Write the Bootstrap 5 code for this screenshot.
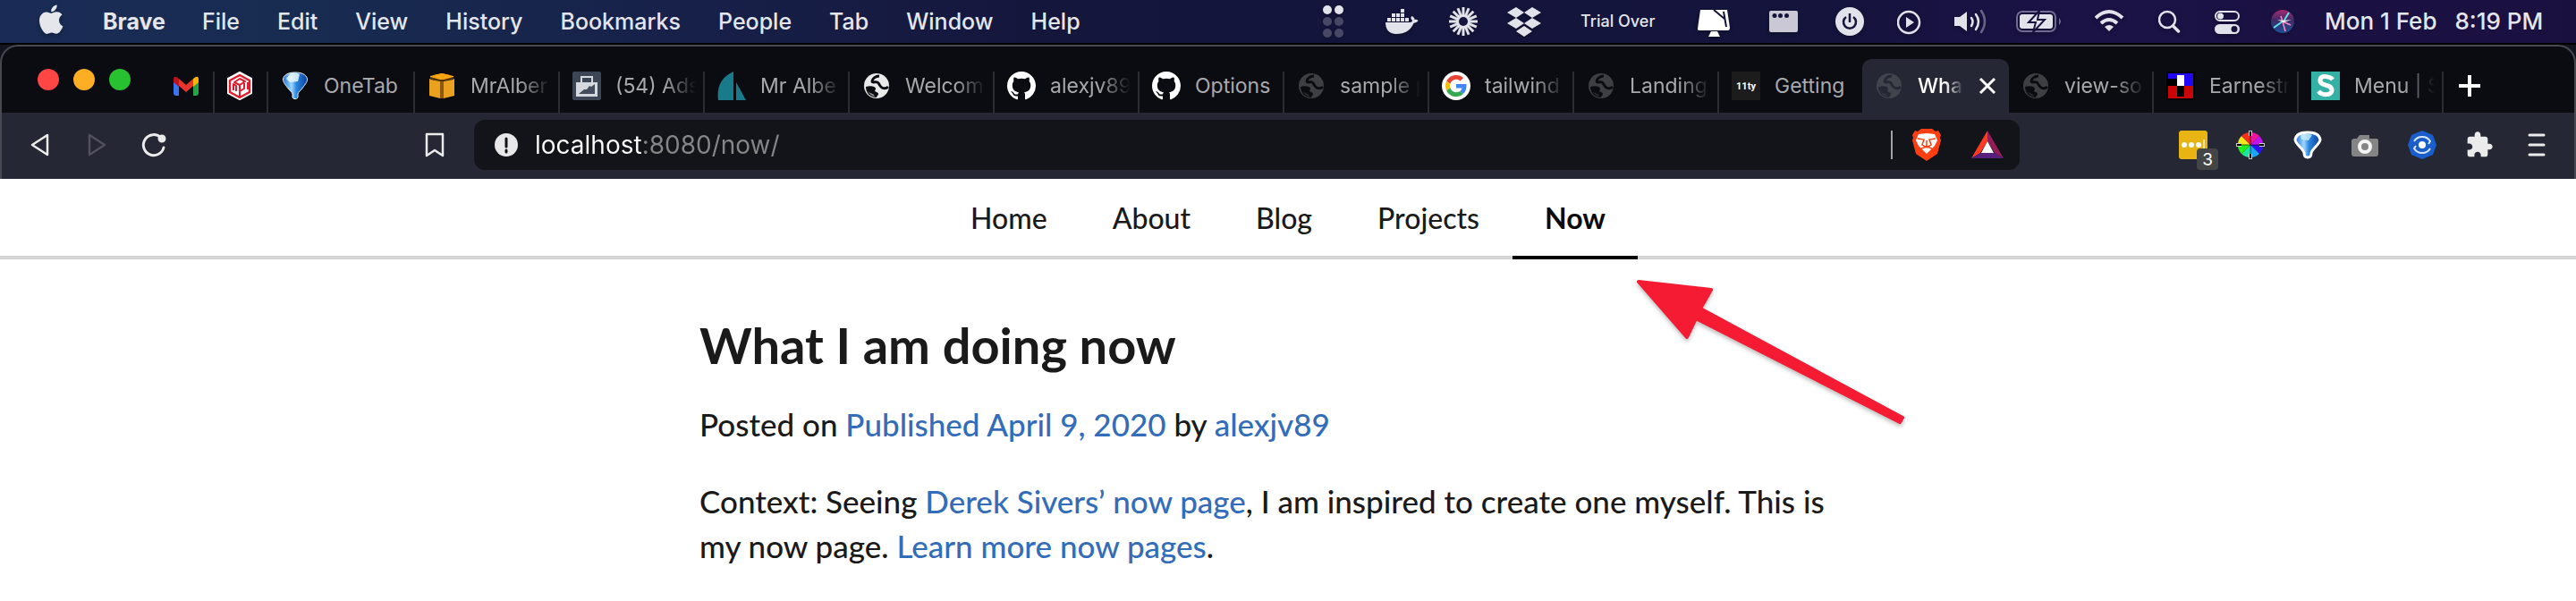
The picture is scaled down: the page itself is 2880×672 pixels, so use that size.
<!DOCTYPE html>
<html lang="en">
<head>
<meta charset="utf-8">
<meta name="viewport" content="width=device-width, initial-scale=1">
<title>What I am doing now</title>
<link href="https://cdn.jsdelivr.net/npm/bootstrap@5.3.0/dist/css/bootstrap.min.css" rel="stylesheet">
<style>
  body { font-family: Lato, "Liberation Sans", sans-serif; color: #1a1a1a; background: #fff; overflow-x: hidden; }
  svg { display: block; flex: none; }
  button { background: none; border: 0; padding: 0; color: inherit; font: inherit; }

  /* system menu bar */
  .sysbar { height: 48px; padding: 0 38px 0 44px; font: 500 25px/48px Inter, sans-serif; color: #e4e6ec; white-space: nowrap;
    background: linear-gradient(90deg, #1a2c56 0%, #182b50 12%, #17214a 26%, #15163c 40%, #14143c 70%, #1b1246 80%, #1a1040 100%); }
  .sysbar .menus { gap: 42px; }
  .sysbar .menus .fw-bold { margin-right: -1px; }
  .sysbar .status { gap: 32px; }
  .sysbar svg { filter: drop-shadow(0 2px 2px rgba(0,0,0,.3)); }
  .trial { width: 99px; font-size: 18px; }
  .clock { width: 243px; gap: 20px; font-size: 26px; }

  /* browser window */
  .browser { background: #11131f; border-top: 2px solid #000; font-family: Inter, sans-serif; }
  .frame { border: 2px solid #484950; border-bottom: 0; border-radius: 20px 20px 0 0; background: #0b0c11; overflow: hidden; }
  .strip { height: 74px; padding: 14px 0 0 40px; }
  .lights { gap: 16px; padding-top: 11px; width: 138px; height: 60px; }
  .lights button { width: 24px; height: 24px; border-radius: 50%; }
  .tab-item { flex: 0 1 162px; min-width: 0; height: 60px; padding-left: 14px; position: relative; font-size: 23px; line-height: 32px; color: #a9a9ac; }
  .tab-item.pinned { flex-basis: 60px; padding-left: 12px; }
  .tab-item.roomy { flex-basis: 164px; }
  .tab-item.ends { flex-basis: 160px; }
  .tab-item:not(.ends):not(.current) { background: linear-gradient(#2c2c30, #2c2c30) right bottom / 2px 46px no-repeat; }
  .tab-item button { gap: 16px; min-width: 0; }
  .tab-item .caption { width: 92px; overflow: hidden; white-space: nowrap; text-align: left;
    -webkit-mask-image: linear-gradient(90deg, #000 60%, transparent 98%); mask-image: linear-gradient(90deg, #000 60%, transparent 98%); }
  .tab-item .caption.whole { -webkit-mask-image: none; mask-image: none; }
  .tab-item.current { flex-basis: 164px; background: #252734; color: #fff; border-radius: 10px 10px 0 0; font-weight: 500; }
  .tab-item.current .caption { width: 52px; }
  .tools { background: #252734; height: 74px; padding: 8px 26px 10px; color: #ebebeb; }
  .tools .gap-tools { gap: 32px; }
  .bookmark { margin-left: 282px; }
  .omnibox { margin-left: 28px; margin-right: 178px; height: 56px; border-radius: 12px; background: #131419; padding: 0 18px 0 22px; }
  .omnibox input { border: 0; outline: 0; padding: 0; margin-left: 16px; min-width: 0; height: 56px; font: 400 28px/56px Inter, sans-serif;
    color: transparent; -webkit-background-clip: text; background-clip: text; background-color: transparent;
    background-image: linear-gradient(90deg, #fff 122px, #858688 122px); }
  .sepline { width: 2px; height: 32px; background: #a2a2a5; margin-right: 22px; }
  .shield { margin-right: 34px; }
  .counter { position: absolute; left: 20px; top: 20px; width: 24px; height: 24px; border-radius: 4px; background: #444547; color: #fff; font-size: 19px; line-height: 25px; text-align: center; }

  /* site */
  .sitenav { border-bottom: 4px solid #d5d5d5; gap: 1px; }
  .sitenav .nav-link { padding: 20px 36px 18px; margin-bottom: -4px; border-bottom: 4px solid transparent; font-size: 32px; line-height: 48px; color: #1a1a1a; font-weight: 500; }
  .sitenav .nav-link.active { font-weight: 700; color: #0b0b0b; border-bottom-color: #000; }
  .post { max-width: 1316px; margin: 0 auto; padding-top: 62px; position: relative; font-size: 35px; line-height: 50px; font-weight: 500; }
  .post h1 { font-size: 56px; line-height: 68px; font-weight: 700; margin: 0 0 29px; }
  .post p { margin: 0 0 36px; }
  .post a { color: #336dba; text-decoration: none; }
  .pointer { position: absolute; left: 1044px; top: 18px; filter: drop-shadow(0 3px 2px rgba(0,0,0,.25)); }
</style>
</head>
<body>

<svg width="0" height="0" class="position-absolute" aria-hidden="true">
  <defs>
    <symbol id="globe" viewBox="0 0 32 32"><mask id="gm"><circle cx="16" cy="16" r="14" fill="#fff"/><path d="M4 17c3-1 7-1 9 0 3 1 2 3 1 5 1 1 4 1 4 3s-2 2-2 4C9 29 4 24 4 17z" fill="#000"/><path d="M6 22c3 4 5 5 8 6-1-3-2-3-5-4z" fill="#fff" opacity=".6"/><path d="M19 5c-4 0-8 3-8 6 0 2 4 0 6 1s2 4 5 6c2 1 5 1 7-1" fill="none" stroke="#000" stroke-width="3"/></mask><rect width="32" height="32" fill="currentColor" mask="url(#gm)"/></symbol>
    <symbol id="octo" viewBox="0 0 16 16"><path fill="#fff" d="M8 0C3.58 0 0 3.58 0 8c0 3.54 2.29 6.53 5.47 7.59.4.07.55-.17.55-.38 0-.19-.01-.82-.01-1.49-2.01.37-2.53-.49-2.69-.94-.09-.23-.48-.94-.82-1.13-.28-.15-.68-.52-.01-.53.63-.01 1.08.58 1.23.82.72 1.21 1.87.87 2.33.66.07-.52.28-.87.51-1.07-1.78-.2-3.64-.89-3.64-3.95 0-.87.31-1.59.82-2.15-.08-.2-.36-1.02.08-2.12 0 0 .67-.21 2.2.82.64-.18 1.32-.27 2-.27s1.36.09 2 .27c1.53-1.04 2.2-.82 2.2-.82.44 1.1.16 1.92.08 2.12.51.56.82 1.27.82 2.15 0 3.07-1.87 3.75-3.65 3.95.29.25.54.73.54 1.48 0 1.07-.01 1.93-.01 2.2 0 .21.15.46.55.38A8.01 8.01 0 0 0 16 8c0-4.42-3.58-8-8-8z"/></symbol>
    <linearGradient id="blue"><stop offset="0" stop-color="#1d6fd0"/><stop offset=".35" stop-color="#9fd8ff"/><stop offset=".55" stop-color="#2a86e0"/><stop offset="1" stop-color="#0a3f9c"/></linearGradient>
    <symbol id="funnel" viewBox="0 0 32 32"><path d="M2.500 8C4 3 9 1 16 1s12 2 13.500 7c.5 3-2 6-5 10-2 3-5 5-5.500 7v4l-1.500 1.500h-3L13 29v-4c-.5-2-3.500-4-5.500-7-3-4-5.500-7-5-10z" fill="url(#blue)" stroke="#e8f2fa"/><path d="M10 3c4-2 9-1 11 0l-2 8-9 1-4-4z" fill="#eaf7ff" opacity=".85"/></symbol>
  </defs>
</svg>

<header class="sysbar d-flex justify-content-between">
  <nav class="menus d-flex align-items-center" aria-label="Menu bar">
    <svg width="29" height="48" viewBox="0 0 29 48" fill="#e4e6ec"><path transform="translate(-3 5.500) scale(1.350)" d="M12.152 6.896c-.948 0-2.415-1.078-3.960-1.040-2.040.027-3.910 1.183-4.961 3.014-2.117 3.675-.546 9.103 1.519 12.090 1.013 1.454 2.208 3.090 3.792 3.039 1.520-.065 2.090-.987 3.935-.987 1.831 0 2.350.987 3.960.948 1.637-.026 2.676-1.480 3.676-2.948 1.156-1.688 1.636-3.325 1.662-3.415-.039-.013-3.182-1.221-3.220-4.857-.026-3.040 2.480-4.494 2.597-4.559-1.429-2.090-3.623-2.324-4.390-2.376-2-.156-3.675 1.090-4.610 1.090zM15.530 3.830c.843-1.012 1.400-2.427 1.245-3.830-1.207.052-2.662.805-3.532 1.818-.780.896-1.454 2.338-1.273 3.714 1.338.104 2.715-.688 3.559-1.701"/></svg>
    <button class="fw-bold">Brave</button><button>File</button><button>Edit</button><button>View</button><button>History</button><button>Bookmarks</button><button>People</button><button>Tab</button><button>Window</button><button>Help</button>
  </nav>
  <div class="status d-flex align-items-center">
    <svg width="38" height="48" fill="#e2e2ea"><g><circle cx="5" cy="11" r="5"/><circle cx="18" cy="11" r="5"/></g><g opacity=".25"><circle cx="5" cy="24" r="5"/><circle cx="18" cy="24" r="5"/><circle cx="5" cy="37" r="5"/><circle cx="18" cy="37" r="5"/></g></svg>
    <svg width="39" height="48" fill="#e2e2ea"><path d="M0 25h27c2 0 3-1 3-2-2-2-2-4-.500-5 2 1 3 2 3 4 1.500-.5 3 0 4 1-1 2-3 2.500-5 3C28 34 22 38 12 38 4 38 0 33 0 25z"/><path d="M2 20h4v4H2zM7 20h4v4H7zM12 20h4v4h-4zM17 20h4v4h-4zM22 20h4v4h-4zM7 15h4v4H7zM12 15h4v4h-4zM17 15h4v4h-4zM17 10h4v4h-4z"/></svg>
    <svg width="33" height="48" viewBox="0 0 33 48"><path d="M16 8v32M0 24h32M4.700 12.700l22.600 22.600M4.700 35.300l22.600-22.600M1.200 17.900l29.600 12.200M1.200 30.100l29.600-12.200M9.900 9.200l12.200 29.600M22.100 9.200L9.900 38.800" stroke="#e2e2ea" stroke-width="3"/><circle cx="16" cy="24" r="5" fill="#15143d"/></svg>
    <svg width="50" height="48" fill="#e2e2ea"><path d="M10 8l9 6-9 6-10-6zM28 8l10 6-10 6-9-6zM10 20l9 6-9 6-10-6zM28 20l10 6-10 6-9-6zM19 29l9 6-9 6-9-6z"/></svg>
    <span class="trial">Trial Over</span>
    <svg width="48" height="48" fill="#fff"><path d="M3 11h30l3 20c0 2-1 3-2 3H2c-2 0-2-1-2-2zM15 35h7l3 6H12z"/><path d="M18 11l12 10M29 13l3 17" stroke="#15143d" stroke-width="2" fill="none"/></svg>
    <svg width="42" height="48"><rect y="12" width="32" height="24" rx="2" fill="#c9c8d4"/><g fill="#15143d"><circle cx="6" cy="17.500" r="2.500"/><circle cx="12.500" cy="17.500" r="2.500"/><circle cx="19.500" cy="17.500" r="2.500"/></g></svg>
    <svg width="37" height="48"><circle cx="16" cy="24" r="16" fill="#e2e2ea"/><path d="M12 19a7 7 0 1 0 8 0M16 15v10" fill="none" stroke="#15143d" stroke-width="2.500"/></svg>
    <svg width="31" height="48"><circle cx="13" cy="25" r="12" fill="none" stroke="#e2e2ea" stroke-width="2.500"/><path d="M10 19v12l9-6z" fill="#e2e2ea"/></svg>
    <svg width="38" height="48" fill="none" stroke="#e2e2ea" stroke-width="2.500" stroke-linecap="round"><path d="M1 19h6l8-6v22l-8-6H1z" fill="#e2e2ea" stroke="none"/><path d="M20 20q3 4 0 9M25 16q6 8 0 17"/><path d="M31 12q8 12 0 24" opacity=".4"/></svg>
    <svg width="56" height="48" fill="none"><rect x="1" y="13" width="43" height="22" rx="6" stroke="#6f6b93" stroke-width="2"/><path d="M48 20q4 4 0 8z" fill="#6f6b93"/><rect x="4" y="16" width="37" height="16" rx="3" fill="#e2e2ea"/><path d="M26 12L14 25h8l-3 11 13-14h-8z" fill="#e2e2ea" stroke="#19123f" stroke-width="2"/></svg>
    <svg width="39" height="48" fill="none" stroke="#e2e2ea" stroke-width="4"><path d="M1 20q15-14 30 0M7 26q9-8 18 0"/><path d="M16 35l-5-5q5-4 10 0z" fill="#e2e2ea" stroke="none"/></svg>
    <svg width="31" height="48" fill="none" stroke="#e2e2ea" stroke-width="2.500"><circle cx="10" cy="22" r="9"/><path d="M16.500 29l6 6" stroke-width="3.500" stroke-linecap="round"/></svg>
    <svg width="31" height="48" fill="none"><rect x="1" y="13" width="26" height="10" rx="5" stroke="#e2e2ea" stroke-width="2"/><circle cx="6.500" cy="18" r="3.500" fill="#e2e2ea"/><rect y="27" width="28" height="11" rx="5.500" fill="#e2e2ea"/><circle cx="22" cy="32.500" r="3.500" fill="#19123f"/></svg>
    <svg width="28" height="48"><defs><linearGradient id="siri" x1="0" y1="0" x2="0" y2="1"><stop offset="0" stop-color="#a8286f"/><stop offset=".45" stop-color="#3c2c68"/><stop offset="1" stop-color="#1d4f96"/></linearGradient></defs><circle cx="13" cy="24" r="13" fill="url(#siri)"/><path d="M3 31l10-7M20 14l-6 10" stroke="#5fe0e8" stroke-width="2"/><path d="M11 18l2 6 3 11M13 24l9 4" stroke="#ff8dcb" stroke-width="1.500" fill="none"/><path d="M7 22l7 1 9-1-9 3z" fill="#fff"/></svg>
    <time class="clock d-flex"><span>Mon 1 Feb</span><span>8:19 PM</span></time>
  </div>
</header>

<section class="browser">
  <div class="frame">
    <div class="strip d-flex">
      <div class="lights d-flex"><button style="background:#fe4644" aria-label="Close window"></button><button style="background:#fdae24" aria-label="Minimise"></button><button style="background:#28c131" aria-label="Zoom"></button></div>
      <div class="tab-item pinned d-flex align-items-center"><button aria-label="Gmail"><svg width="32" height="32"><path d="M2 10v14q0 3 3 3h3V13z" fill="#3b72ee"/><path d="M24 13v14h3q3 0 3-3V10z" fill="#2ba24a"/><path d="M8 8l8 7 8-7v8l-8 7-8-7z" fill="#e6342e"/><path d="M2 9q0-6 6-1v9l-6-5z" fill="#b81420"/><path d="M30 9q0-6-6-1v9l6-5z" fill="#fbb40e"/></svg></button></div>
      <div class="tab-item pinned d-flex align-items-center"><button aria-label="Box"><svg width="32" height="32" fill="none" stroke-linejoin="round"><path d="M16 1l13 7v16l-13 7-13-7V8z" fill="#fff" stroke="#fff" stroke-width="2"/><path d="M16 4l11 6v13l-11 6-11-6V10z" stroke="#e01d2c" stroke-width="2.500"/><path d="M10 12l6-4 6 3-6 4zM16 15v13M9 21v-7l3 2v6M21 13v6l-5 3M25 12v8" stroke="#e01d2c" stroke-width="2"/></svg></button></div>
      <div class="tab-item roomy d-flex align-items-center"><button class="d-flex"><svg width="32" height="32"><use href="#funnel"/></svg><span class="caption whole">OneTab</span></button></div>
      <div class="tab-item d-flex align-items-center"><button class="d-flex"><svg width="32" height="32"><path d="M2 8l14 3 14-3v19l-12 3h-4L2 27z" fill="#eaa11f"/><path d="M14 11h4v19h-4z" fill="#8a5a10"/><path d="M3 5l13-3 13 3v2l-13 4L3 7z" fill="#ffa512"/><path d="M3 6l11 3h4l11-3v3l-11 2h-4L3 9z" fill="#4d340c"/><path d="M7 4l9-2 9 2-9 4z" fill="#ffa512"/></svg><span class="caption">MrAlber</span></button></div>
      <div class="tab-item d-flex align-items-center"><button class="d-flex"><svg width="32" height="32"><rect width="32" height="32" rx="2" fill="#3c4655"/><path d="M4 12h24v16H4z" fill="#d5d9df"/><path d="M10 12V6h12v6" fill="none" stroke="#d5d9df" stroke-width="2"/><path d="M7 25l6-5h3l3-4 2 1 4-3v11z" fill="#434d5c"/></svg><span class="caption">(54) Ads</span></button></div>
      <div class="tab-item d-flex align-items-center"><button class="d-flex"><svg width="32" height="32" fill="#187a8a"><path d="M18 0v32H1C-1 18 4 6 18 0zM21 12l11 20H21z"/></svg><span class="caption">Mr Albe</span></button></div>
      <div class="tab-item d-flex align-items-center"><button class="d-flex"><svg width="32" height="32" color="#e9e9e9"><use href="#globe"/></svg><span class="caption">Welcom</span></button></div>
      <div class="tab-item d-flex align-items-center"><button class="d-flex"><svg width="32" height="32"><use href="#octo"/></svg><span class="caption">alexjv89</span></button></div>
      <div class="tab-item d-flex align-items-center"><button class="d-flex"><svg width="32" height="32"><use href="#octo"/></svg><span class="caption whole">Options</span></button></div>
      <div class="tab-item d-flex align-items-center"><button class="d-flex"><svg width="32" height="32" color="#3e3f43"><use href="#globe"/></svg><span class="caption">sample p</span></button></div>
      <div class="tab-item d-flex align-items-center"><button class="d-flex"><svg width="32" height="32" viewBox="-8 -8 64 64"><circle cx="24" cy="24" r="32" fill="#fff"/><path fill="#EA4335" d="M24 9.500c3.540 0 6.710 1.220 9.210 3.600l6.850-6.850C35.900 2.380 30.470 0 24 0 14.620 0 6.510 5.380 2.560 13.220l7.980 6.190C12.430 13.720 17.740 9.500 24 9.500z"/><path fill="#4285F4" d="M46.980 24.550c0-1.570-.150-3.090-.380-4.550H24v9.020h12.940c-.580 2.960-2.260 5.480-4.780 7.180l7.730 6c4.510-4.180 7.090-10.360 7.090-17.650z"/><path fill="#FBBC05" d="M10.530 28.590c-.480-1.450-.760-2.990-.760-4.590s.270-3.140.760-4.590l-7.980-6.190C.920 16.460 0 20.120 0 24c0 3.880.920 7.540 2.560 10.780z"/><path fill="#34A853" d="M24 48c6.480 0 11.930-2.130 15.890-5.810l-7.730-6c-2.150 1.450-4.920 2.300-8.160 2.300-6.260 0-11.570-4.220-13.470-9.910l-7.980 6.190C6.510 42.620 14.620 48 24 48z"/></svg><span class="caption">tailwind</span></button></div>
      <div class="tab-item d-flex align-items-center"><button class="d-flex"><svg width="32" height="32" color="#3e3f43"><use href="#globe"/></svg><span class="caption">Landing</span></button></div>
      <div class="tab-item ends d-flex align-items-center"><button class="d-flex"><svg width="32" height="32"><rect width="32" height="32" fill="#1c1c1c"/><text x="16" y="20" text-anchor="middle" font-family="Roboto" font-weight="700" font-size="11" fill="#fff">11ty</text></svg><span class="caption whole">Getting</span></button></div>
      <div class="tab-item current d-flex align-items-center"><button class="d-flex"><svg width="32" height="32" color="#42444d"><use href="#globe"/></svg><span class="caption">Wha</span></button><button class="ms-3" aria-label="Close tab"><svg width="20" height="20"><path d="M2 2l16 16M18 2L2 18" stroke="#fff" stroke-width="3"/></svg></button></div>
      <div class="tab-item d-flex align-items-center"><button class="d-flex"><svg width="32" height="32" color="#3e3f43"><use href="#globe"/></svg><span class="caption">view-so</span></button></div>
      <div class="tab-item d-flex align-items-center"><button class="d-flex"><svg width="32" height="32"><path d="M0 0h32v32H0z" fill="#000"/><path d="M2 2h10v6H2zM12 2h18v14H20V4h-8z" fill="#2207f5"/><path d="M12 4h8v12h-8z" fill="#fff"/><path d="M2 16h10v14H2zM20 16h10v14H20zM12 28h8v2h-8z" fill="#c90508"/></svg><span class="caption">Earnestr</span></button></div>
      <div class="tab-item d-flex align-items-center"><button class="d-flex"><svg width="32" height="32"><rect width="32" height="32" fill="#33b1a5"/><path d="M24 9c-3-4-13-5-14 0-1 8 13 4 13 12 0 6-11 6-15 1" fill="none" stroke="#fff" stroke-width="5"/></svg><span class="caption">Menu | S</span></button></div>
      <button class="ms-3" aria-label="New tab"><svg width="26" height="26"><path d="M13 1v24M1 13h24" stroke="#fff" stroke-width="4"/></svg></button>
    </div>

    <div class="tools d-flex align-items-center">
      <div class="d-flex gap-tools">
        <button aria-label="Back"><svg width="32" height="32" fill="none" stroke="#ebebeb" stroke-width="2.500" stroke-linejoin="round"><path d="M25 5v22L8 16z"/></svg></button>
        <button aria-label="Forward"><svg width="32" height="32" fill="none" stroke="#50515d" stroke-width="2.500" stroke-linejoin="round"><path d="M8 5v22l17-11z"/></svg></button>
        <button aria-label="Reload"><svg width="32" height="32" fill="none" stroke="#ebebeb" stroke-width="3" stroke-linecap="round"><path d="M24 8A11.500 11.500 0 1 0 27 19"/><circle cx="25" cy="9" r="3" fill="#ebebeb"/></svg></button>
      </div>
      <button class="bookmark" aria-label="Bookmark"><svg width="32" height="32" fill="none" stroke="#ebebeb" stroke-width="2.500" stroke-linejoin="round"><path d="M7 4h18v24l-9-6-9 6z"/></svg></button>
      <div class="omnibox d-flex align-items-center flex-grow-1">
        <svg width="30" height="32"><circle cx="14" cy="16" r="13" fill="#e8e8e8"/><path d="M14 9v9M14 22v2" stroke="#131419" stroke-width="3" stroke-linecap="round"/></svg>
        <input class="flex-grow-1" type="text" value="localhost:8080/now/" aria-label="Address">
        <span class="sepline"></span>
        <svg width="32" height="36" class="shield"><path d="M10 0h12l4 3 3-1 3 5-1 3 1 3-4 15-12 8-12-8L0 13l1-3-1-3 3-5 3 1z" fill="#fb3f12"/><path d="M7 6l9-1 9 1 3 7-3 6-3 3-6 6-6-6-3-3-3-6z" fill="#fff"/><path d="M6 11l7 1-2 6 5 3 5-3-2-6 7-1M16 13v7M10 22l6-2 6 2" fill="none" stroke="#fb3f12" stroke-width="1.500"/></svg>
        <svg width="36" height="32"><path d="M18 0L0 31l10-6 8-13z" fill="#ff3a23"/><path d="M18 0l18 31-10-6-8-13z" fill="#931e57"/><path d="M0 31h36l-10-6H10z" fill="#57207f"/><path d="M18 12l7 13H11z" fill="#fff"/></svg>
      </div>
      <div class="d-flex gap-tools">
        <button class="position-relative" aria-label="Notes extension"><svg width="32" height="32"><rect width="32" height="32" rx="3" fill="#e8b414"/><g fill="#fff"><circle cx="6" cy="16" r="3"/><circle cx="14" cy="16" r="3"/><circle cx="22" cy="16" r="3"/><path d="M27 10h2v12h-2z" opacity=".6"/></g></svg><span class="counter">3</span></button>
        <button aria-label="Colour picker"><svg width="32" height="32"><path d="M16 16V2a14 14 0 0 1 10 4z" fill="#f0149c"/><path d="M16 16L26 6a14 14 0 0 1 4 10z" fill="#c015f0"/><path d="M16 16h14a14 14 0 0 1-4 10z" fill="#2a12f2"/><path d="M16 16l10 10a14 14 0 0 1-10 4z" fill="#1aa5f4"/><path d="M16 16v14a14 14 0 0 1-10-4z" fill="#1ce69a"/><path d="M16 16L6 26a14 14 0 0 1-4-10z" fill="#25f01c"/><path d="M16 16H2A14 14 0 0 1 6 6z" fill="#f0e81a"/><path d="M16 16L6 6a14 14 0 0 1 10-4z" fill="#f5301a"/><path d="M16 0v6M16 26v6M0 16h6M26 16h6" stroke="#ccc" stroke-width="4"/><path d="M16 1v5M16 26v5M1 16h5M26 16h5" stroke="#000" stroke-width="2"/><path d="M16 6v20M6 16h20" stroke="#000" stroke-width="1" opacity=".6"/></svg></button>
        <button aria-label="OneTab"><svg width="32" height="32"><path d="M2 10C3 4 9 2 16 2s13 2 14 8c0 5-9 10-10 15 0 4-1 5-4 5s-4-1-4-5C11 20 2 15 2 10z" fill="url(#blue)" stroke="#fff" stroke-width="3"/><path d="M8 5q8-3 13 0l-4 6-8-1z" fill="#c8ecff" opacity=".8"/></svg></button>
        <button aria-label="Screenshot"><svg width="32" height="32"><path d="M10 5h11v4h8q2 0 2 2v15q0 3-3 3H4q-3 0-3-3V12q0-3 3-3h3z" fill="#858585"/><circle cx="16" cy="18" r="6" fill="#858585" stroke="#f4f4f4" stroke-width="4"/></svg></button>
        <button aria-label="Sync"><svg width="32" height="32"><path d="M16 0l12 5 4 11-4 11-12 5-12-5L0 16 4 5z" fill="#195ecb"/><circle cx="16" cy="16" r="4" fill="#fff"/><path d="M7 12q3-5 9-5 6 0 9 5l-2 3M25 20q-3 5-9 5-6 0-9-5l2-3" fill="none" stroke="#d8e7ff" stroke-width="2"/></svg></button>
        <button aria-label="Extensions"><svg width="32" height="32" viewBox="0 0 24 24" fill="#ebebeb"><path d="M20.500 11H19V7c0-1.100-.9-2-2-2h-4V3.500C13 2.120 11.880 1 10.500 1S8 2.120 8 3.500V5H4c-1.100 0-1.990.9-1.990 2v3.800H3.500c1.490 0 2.700 1.210 2.700 2.700s-1.210 2.700-2.700 2.700H2V20c0 1.100.9 2 2 2h3.800v-1.500c0-1.490 1.210-2.700 2.700-2.700 1.490 0 2.700 1.210 2.700 2.700V22H17c1.100 0 2-.9 2-2v-4h1.500c1.380 0 2.500-1.120 2.500-2.500S21.880 11 20.500 11z"/></svg></button>
        <button aria-label="Menu"><svg width="32" height="32"><path d="M8 5h16M8 16h16M8 27h16" stroke="#ebebeb" stroke-width="3" stroke-linecap="round"/></svg></button>
      </div>
    </div>
  </div>
</section>

<nav class="sitenav nav justify-content-center">
  <a class="nav-link" href="#home">Home</a>
  <a class="nav-link" href="#about">About</a>
  <a class="nav-link" href="#blog">Blog</a>
  <a class="nav-link" href="#projects">Projects</a>
  <a class="nav-link active" href="#now" aria-current="page">Now</a>
</nav>

<main class="post">
  <h1>What I am doing now</h1>
  <p>Posted on <a href="#date">Published April 9, 2020</a> by <a href="#author">alexjv89</a></p>
  <p>Context: Seeing <a href="#sivers">Derek Sivers’ now page</a>, I am inspired to create one myself. This is<br>my now page. <a href="#more">Learn more now pages</a>.</p>
  <svg class="pointer" width="310" height="176" viewBox="0 0 310 176" aria-hidden="true"><path d="M6 7l81 9-12 21 226 122-3 5L70 48l-10 21z" fill="#f51b33" stroke="#f51b33" stroke-width="4" stroke-linejoin="round"/></svg>
</main>

<script src="https://cdn.jsdelivr.net/npm/bootstrap@5.3.0/dist/js/bootstrap.bundle.min.js"></script>
</body>
</html>
